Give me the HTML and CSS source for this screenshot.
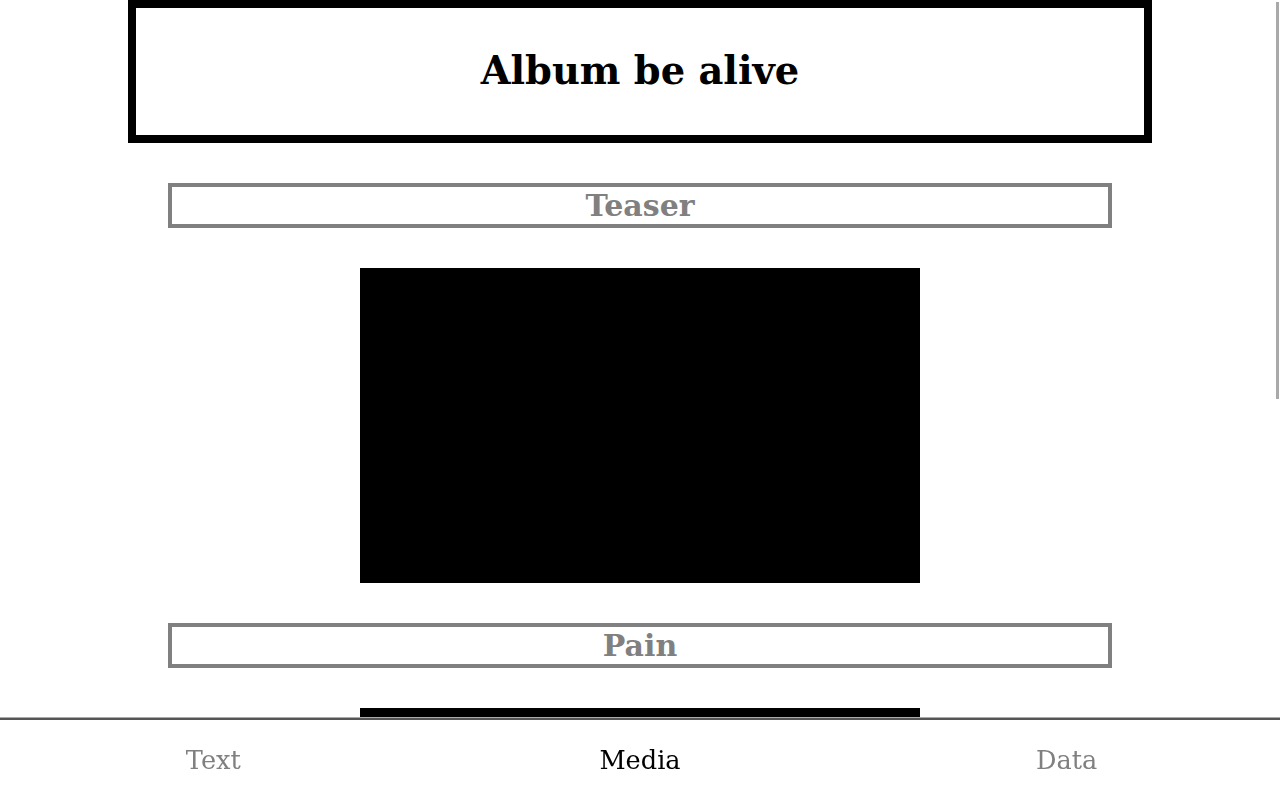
FILE: index.html
```html
<!DOCTYPE html>
<html lang="en">
<head>
<meta charset="utf-8">
<title>Album be alive</title>
<link rel="stylesheet" href="styles.css">
</head>
<body>
<header class="title-box">
  <h1 class="title">Album be alive</h1>
</header>
<main class="content">
  <section class="track">
    <h2 class="track-name">Teaser</h2>
    <div class="video"></div>
  </section>
  <section class="track">
    <h2 class="track-name">Pain</h2>
    <div class="video"></div>
  </section>
  <section class="track">
    <h2 class="track-name">Alive</h2>
    <div class="video"></div>
  </section>
</main>
<nav class="tabbar">
  <a class="tab">Text</a>
  <a class="tab active">Media</a>
  <a class="tab">Data</a>
</nav>
<div class="scroll-thumb"></div>
</body>
</html>
```

FILE: styles.css
```css
html, body {
  margin: 0;
  padding: 0;
  background: #fff;
}
body {
  font-family: "DejaVu Serif", serif;
  color: #000;
  padding-bottom: 123px;
}
.title-box {
  width: 1008px;
  height: 127px;
  margin: 0 auto;
  border: 8px solid #000;
  display: flex;
  align-items: center;
  justify-content: center;
}
.title {
  margin: 0;
  font-size: 38.4px;
  font-weight: bold;
  line-height: 1;
}
.content {
  width: 944px;
  margin: 0 auto;
  display: flex;
  flex-direction: column;
}
.track {
  display: flex;
  flex-direction: column;
  align-items: center;
  padding-top: 40px;
  gap: 40px;
}
.track-name {
  align-self: stretch;
  margin: 0;
  height: 37px;
  border: 4px solid #808080;
  color: #808080;
  font-size: 30px;
  font-weight: bold;
  line-height: 37px;
  text-align: center;
}
.video {
  width: 560px;
  height: 315px;
  background: #000;
}
.tabbar {
  position: fixed;
  left: 0;
  right: 0;
  bottom: 0;
  height: 80px;
  background: #fff;
  border-top: 2px solid #555;
  box-shadow: 0 -1px 0 #aaa;
  display: grid;
  grid-template-columns: 1fr 1fr 1fr;
  align-items: center;
}
.tab {
  text-align: center;
  font-size: 25.6px;
  color: #808080;
}
.tab.active {
  color: #000;
}
.scroll-thumb {
  position: fixed;
  top: 2px;
  right: 1px;
  width: 3px;
  height: 397px;
  background: #a9a9a9;
}
```
